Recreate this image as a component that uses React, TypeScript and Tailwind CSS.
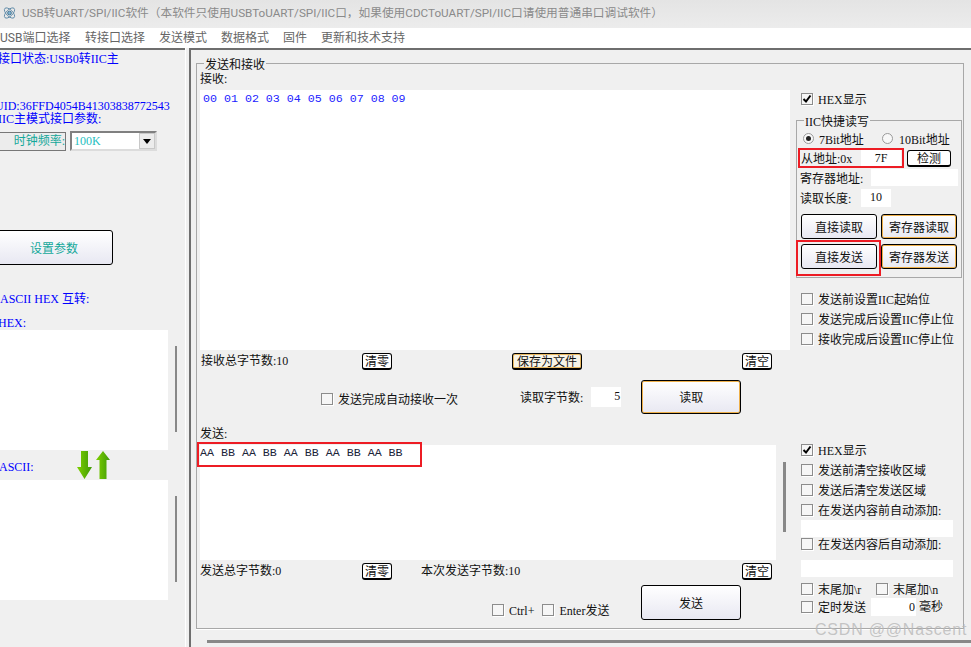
import React from 'react';

const cjk = 'font-["Liberation_Serif","Noto_Sans_CJK_SC",serif]';

const Check: React.FC<{ checked?: boolean; className?: string }> = ({ checked, className = '' }) => (
  <span className={`w-[12px] h-[12px] shrink-0 border border-[#8c8c8c] bg-[#f6f6f6] shadow-[1px_1px_0_#ffffff] flex items-center justify-center ${className}`}>
    {checked && (
      <svg width="10" height="10" viewBox="0 0 10 10">
        <path d="M1.5 5 L4 7.5 L8.5 1.5" fill="none" stroke="#000" strokeWidth="2" />
      </svg>
    )}
  </span>
);

const CheckRow: React.FC<{ label: string; checked?: boolean; className?: string }> = ({ label, checked, className = '' }) => (
  <div className={`flex items-center h-[12px] whitespace-nowrap ${className}`}>
    <Check checked={checked} />
    <span className="ml-[5px] pt-[2px]">{label}</span>
  </div>
);

const Radio: React.FC<{ on?: boolean }> = ({ on }) => (
  <span className="w-[11px] h-[11px] shrink-0 rounded-full border border-[#9a9a9a] bg-[#f8f8f8] flex items-center justify-center">
    {on && <span className="w-[5px] h-[5px] rounded-full bg-[#222]" />}
  </span>
);

// small toolbar button with the heavy bottom edge
const SmallBtn: React.FC<{ label: string; orange?: boolean; className?: string }> = ({ label, orange, className = '' }) => (
  <div className={`h-[17px] pt-[2px] flex items-center justify-center rounded-[3px] border border-b-2 border-black whitespace-nowrap ${orange ? 'bg-[#f7f3e6] shadow-[inset_0_0_0_1px_#e8b860]' : 'bg-white'} ${className}`}>
    {label}
  </div>
);

const Btn: React.FC<{ label: string; orange?: boolean; className?: string; children?: React.ReactNode }> = ({ label, orange, className = '', children }) => (
  <div className={`relative flex items-center justify-center rounded-[3px] border border-black bg-gradient-to-b from-white to-[#e8e8f2] whitespace-nowrap ${orange ? 'shadow-[inset_0_0_0_1px_#eeb04a]' : ''} ${className}`}>
    <span className="pt-[2px]">{label}</span>
    {children}
  </div>
);

const LeftPanel: React.FC = () => (
  <div className="w-[185px] h-full shrink-0 overflow-hidden bg-[#f0f0f0] border-t-2 border-[#6e6e6e] text-[#0000ff] relative">
    <div className="h-[16px] mt-[1px] -ml-[2px] flex items-center whitespace-nowrap">接口状态:USB0转IIC主</div>
    <div className="h-[12px] mt-[33px] -ml-[5px] flex items-center whitespace-nowrap">UID:36FFD4054B41303838772543</div>
    <div className="h-[12px] mt-[1px] -ml-[2px] flex items-center whitespace-nowrap">IIC主模式接口参数:</div>
    <div className="flex items-center mt-[6px] h-[20px]">
      <div className="w-[67px] h-[19px] -ml-[1px] border border-[#777] bg-[#ececec] text-[#14a89a] flex items-center justify-end whitespace-nowrap">时钟频率:</div>
      <div className="ml-[4px] w-[87px] h-[20px] border-2 border-[#808080] border-b-[#dcdcdc] border-r-[#dcdcdc] bg-white flex items-center justify-between">
        <span className="ml-[2px] text-[#1fc0c0]">100K</span>
        <span className="w-[16px] h-[16px] bg-[#ececec] border border-[#c8c8c8] flex items-center justify-center">
          <svg width="8" height="5" viewBox="0 0 8 5"><path d="M0 0 H8 L4 5 Z" fill="#000" /></svg>
        </span>
      </div>
    </div>
    <Btn label="设置参数" className="w-[118px] h-[35px] mt-[79px] -ml-[5px] text-[#14a89a]" />
    <div className="h-[16px] mt-[26px] flex items-center whitespace-nowrap">ASCII HEX 互转:</div>
    <div className="h-[16px] mt-[7px] pt-[2px] -ml-[2px] flex items-center">HEX:</div>
    <div className="flex">
      <div className="w-[168px] h-[120px] bg-white" />
      <div className="w-[2px] h-[86px] mt-[16px] ml-[7px] bg-[#888]" />
    </div>
    <div className="h-[30px] flex items-center">
      <span className="w-[78px] mt-[3px] -ml-[1px]">ASCII:</span>
      <svg width="34" height="29" viewBox="0 0 34 29">
        <defs>
          <linearGradient id="arrowGreen" x1="0" y1="0" x2="1" y2="0">
            <stop offset="0" stopColor="#7fd000" />
            <stop offset="1" stopColor="#3f9a08" />
          </linearGradient>
        </defs>
        <path d="M4 0 H11 V16 H15 L7.5 28 L0 16 H4 Z" fill="url(#arrowGreen)" />
        <path d="M26 0 L33 9 H29.5 V28 H22.5 V9 H19 Z" fill="url(#arrowGreen)" />
      </svg>
    </div>
    <div className="flex">
      <div className="w-[168px] h-[120px] bg-white" />
      <div className="w-[2px] h-[86px] mt-[16px] ml-[7px] bg-[#888]" />
    </div>
  </div>
);

const MainColumn: React.FC = () => (
  <div className="w-[590px] ml-[3px] shrink-0">
    <div className="h-[16px] mt-[6px] pt-[2px] flex items-center">接收:</div>
    <div className="relative h-[260px] mt-[4px] bg-white pl-[3px] pt-[2px] text-[#2222ff] font-['Liberation_Mono',monospace] text-[11.65px] leading-[14px] whitespace-pre">00 01 02 03 04 05 06 07 08 09</div>

    <div className="flex items-center mt-[3px] h-[17px]">
      <span className="w-[162px] pl-[1px] -mt-[2px] whitespace-nowrap">接收总字节数:10</span>
      <SmallBtn label="清零" className="w-[30px]" />
      <SmallBtn label="保存为文件" orange className="w-[70px] ml-[120px]" />
      <SmallBtn label="清空" className="w-[30px] ml-[160px]" />
    </div>

    <div className="flex items-center mt-[10px] h-[34px]">
      <CheckRow label="发送完成自动接收一次" className="ml-[121px] mt-[4px]" />
      <span className="ml-[62px] mt-[2px] whitespace-nowrap">读取字节数:</span>
      <div className="w-[30px] h-[20px] ml-[8px] bg-white text-right pr-[1px] leading-[18px]">5</div>
      <Btn label="读取" orange className="w-[100px] h-[34px] ml-[20px]" />
    </div>

    <div className="h-[16px] mt-[11px] pt-[2px] flex items-center">发送:</div>
    <div className="flex mt-[4px]">
      <div className="relative w-[576px] h-[115px] bg-white pt-[1px] text-[#1a2338] font-['Liberation_Mono',monospace] text-[11.65px] leading-[14px] whitespace-pre">
        AA BB AA BB AA BB AA BB AA BB
        <div className="absolute left-[-3px] top-[-3px] w-[225px] h-[25px] border-2 border-[#ed1c24]" />
      </div>
      <div className="w-[3px] h-[70px] mt-[17px] ml-[7px] bg-[#888]" />
    </div>

    <div className="flex items-center mt-[3px] h-[17px]">
      <span className="w-[162px] -mt-[2px] whitespace-nowrap">发送总字节数:0</span>
      <SmallBtn label="清零" className="w-[30px]" />
      <span className="ml-[29px] -mt-[2px] w-[321px] whitespace-nowrap">本次发送字节数:10</span>
      <SmallBtn label="清空" className="w-[30px]" />
    </div>

    <div className="flex mt-[5px] h-[35px]">
      <div className="flex items-center self-end mb-[4px] ml-[292px] h-[12px]">
        <CheckRow label="Ctrl+" />
        <CheckRow label="Enter发送" className="ml-[8px]" />
      </div>
      <Btn label="发送" className="w-[100px] h-[35px] ml-auto mr-[49px]" />
    </div>
  </div>
);

const SideColumn: React.FC = () => (
  <div className="ml-[6px] w-[166px] shrink-0">
    <CheckRow label="HEX显示" checked className="mt-[29px] ml-[5px]" />
    <div className="relative mt-[15px] h-[158px] border border-[#a8a8a8]">
      <span className="absolute left-[7px] -top-[8px] px-[1px] bg-[#f0f0f0] leading-[16px] pt-[1px] whitespace-nowrap">IIC快捷读写</span>
      <div className="flex items-center mt-[11px] ml-[6px] h-[12px] whitespace-nowrap">
        <Radio on />
        <span className="ml-[5px] w-[63px] pt-[3px]">7Bit地址</span>
        <Radio />
        <span className="ml-[6px] pt-[3px]">10Bit地址</span>
      </div>
      <div className="flex items-center mt-[4px] ml-[1px]">
        <div className="w-[106px] h-[20px] border-2 border-[#ed1c24] flex items-center pl-[1px] whitespace-nowrap">
          <span className="w-[60px] pt-[1px]">从地址:0x</span>
          <span className="w-[40px] h-[16px] bg-white text-center leading-[16px]">7F</span>
        </div>
        <SmallBtn label="检测" className="w-[44px] ml-[3px] mt-[1px]" />
      </div>
      <div className="flex items-center h-[19px] ml-[3px] whitespace-nowrap">
        <span className="w-[71px] pt-[2px]">寄存器地址:</span>
        <span className="w-[87px] h-[17px] bg-white" />
      </div>
      <div className="flex items-center h-[18px] mt-[2px] ml-[3px] whitespace-nowrap">
        <span className="w-[61px] pt-[2px]">读取长度:</span>
        <span className="w-[30px] h-[18px] bg-white text-center leading-[16px]">10</span>
      </div>
      <div className="grid grid-cols-[76px_76px] grid-rows-[25px_25px] gap-x-[4px] gap-y-[5px] mt-[7px] ml-[4px]">
        <Btn label="直接读取" />
        <Btn label="寄存器读取" orange />
        <Btn label="直接发送">
          <div className="absolute left-[-6px] top-[-5px] w-[85px] h-[36px] border-2 border-[#ed1c24]" />
        </Btn>
        <Btn label="寄存器发送" orange />
      </div>
    </div>
    <div className="ml-[5px] mt-[15px] flex flex-col gap-y-[8px]">
      <CheckRow label="发送前设置IIC起始位" />
      <CheckRow label="发送完成后设置IIC停止位" />
      <CheckRow label="接收完成后设置IIC停止位" />
    </div>
    <div className="ml-[5px] mt-[99px] flex flex-col">
      <CheckRow label="HEX显示" checked />
      <CheckRow label="发送前清空接收区域" className="mt-[8px]" />
      <CheckRow label="发送后清空发送区域" className="mt-[8px]" />
      <CheckRow label="在发送内容前自动添加:" className="mt-[8px]" />
      <div className="w-[152px] h-[17px] mt-[4px] bg-white" />
      <CheckRow label="在发送内容后自动添加:" className="mt-[1px]" />
      <div className="w-[152px] h-[17px] mt-[10px] bg-white" />
      <div className="flex mt-[6px]">
        <CheckRow label="末尾加\r" className="w-[75px]" />
        <CheckRow label="末尾加\n" />
      </div>
      <div className="flex items-center mt-[3px] h-[18px] whitespace-nowrap">
        <CheckRow label="定时发送" className="w-[70px]" />
        <span className="w-[45px] h-[18px] bg-white text-right pr-[1px] leading-[18px]">0</span>
        <span className="ml-[3px]">毫秒</span>
      </div>
    </div>
  </div>
);

const App: React.FC = () => {
  return (
    <div className={`w-[971px] h-[647px] overflow-hidden relative bg-[#f0f0f0] text-[12px] leading-[16px] text-[#111] ${cjk}`}>
      <div className="h-[28px] flex items-center bg-gradient-to-b from-[#e4e4e4] to-[#ececec] pl-[3px] text-[#8a8a8a] text-[11.7px] font-['Roboto','Noto_Sans_CJK_SC',sans-serif] whitespace-nowrap">
        <svg width="13" height="14" viewBox="0 0 14 14" fill="none" stroke="#5f8aa8" strokeWidth="1" className="-mt-[2px]">
          <ellipse cx="7" cy="7" rx="7" ry="3.4" transform="rotate(45 7 7)" />
          <ellipse cx="7" cy="7" rx="7" ry="3.4" transform="rotate(-45 7 7)" />
          <circle cx="7" cy="7" r="2" fill="#7fb4d4" stroke="#3f6f8f" />
        </svg>
        <span className="ml-[6px] -mt-[2px]">USB转UART/SPI/IIC软件（本软件只使用USBToUART/SPI/IIC口，如果使用CDCToUART/SPI/IIC口请使用普通串口调试软件）</span>
      </div>
      <div className="h-[20px] flex items-center bg-white text-[#666] font-['Roboto','Noto_Sans_CJK_SC',sans-serif] whitespace-nowrap">
        <span className="w-[85px]">USB端口选择</span>
        <span className="w-[74px]">转接口选择</span>
        <span className="w-[62px]">发送模式</span>
        <span className="w-[62px]">数据格式</span>
        <span className="w-[38px]">固件</span>
        <span>更新和技术支持</span>
      </div>
      <div className="flex h-[599px]">
        <LeftPanel />
        <div className="w-[4px] h-full shrink-0 border-l border-white" />
        <div className="flex-1 h-full border-l-2 border-t-2 border-[#6e6e6e] pl-[5px] pt-[13px]">
          <div className="relative w-[768px] h-[566px] border border-[#a8a8a8] shadow-[0_1px_0_#ffffff] flex">
            <span className="absolute left-[7px] -top-[8px] px-[1px] pt-[1px] bg-[#f0f0f0] leading-[16px]">发送和接收</span>
            <MainColumn />
            <SideColumn />
          </div>
          <div className="h-[3px] mt-[11px] ml-[11px] bg-[#888]" />
        </div>
      </div>
      <div className="absolute left-[815px] top-[621px] text-[16px] leading-[18px] tracking-[0.8px] text-[#b8b8b8]/80 font-['Liberation_Sans',sans-serif] whitespace-nowrap">CSDN @@Nascent</div>
    </div>
  );
};

export default App;
